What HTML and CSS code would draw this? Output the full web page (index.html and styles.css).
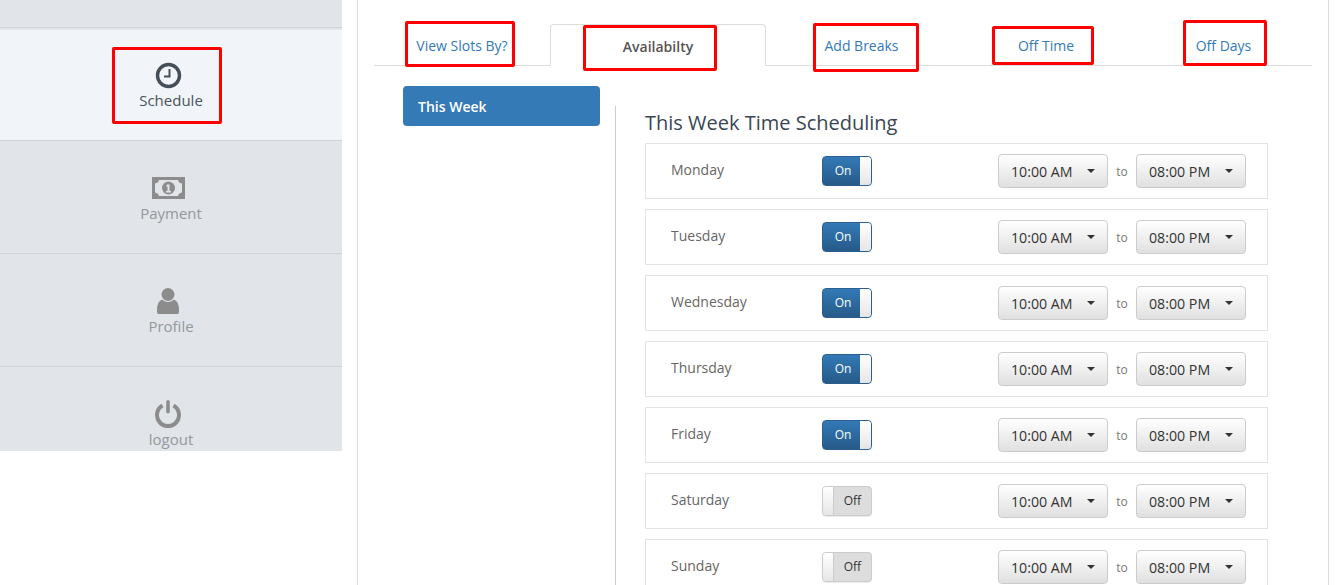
FILE: index.html
```html
<!DOCTYPE html>
<html lang="en" dir="ltr">

<head>
  <meta charset="utf-8">
  <title>Time Scheduling</title>
  <link rel="stylesheet" href="styles.css">
  <meta name="viewport" content="width=device-width, initial-scale=1.0">
</head>

<body>
  <aside class="sidebar">
    <div class="side_top"></div>
    <a class="side_item active">
      <span class="side_icon">
        <svg width="27" height="27" viewBox="0 0 27 27"><circle cx="13.5" cy="13.5" r="11" fill="none" stroke="currentColor" stroke-width="3.4"/><path d="M14.5 7v7.5H9" fill="none" stroke="currentColor" stroke-width="2"/></svg>
      </span>
      <span>Schedule</span>
    </a>
    <a class="side_item">
      <span class="side_icon">
        <svg width="33" height="22" viewBox="0 0 33 22"><path fill-rule="evenodd" fill="currentColor" d="M0 0h33v22H0zM7 3Q6.500 6 3 6.500v9Q6.500 16 7 19h19q.5-3 4-3.500v-9Q26.500 6 26 3z"/><circle cx="16.500" cy="11" r="6.500" fill="currentColor"/><path d="M15 7.500h2.500v6.500H19v1.500h-5V14h1.500V9.500H14z" fill="#e1e5e9"/></svg>
      </span>
      <span>Payment</span>
    </a>
    <a class="side_item">
      <span class="side_icon">
        <svg width="22" height="26" viewBox="0 0 22 26"><circle cx="11" cy="6.500" r="6.500" fill="currentColor"/><path fill="currentColor" d="M5 11.500Q11 16.500 17 11.500Q22 14 22 21V24Q22 26 20 26H2Q0 26 0 24V21Q0 14 5 11.500z"/></svg>
      </span>
      <span>Profile</span>
    </a>
    <a class="side_item">
      <span class="side_icon">
        <svg width="28" height="28" viewBox="0 1 28 28"><path d="M8.500 6.500a11 11 0 1 0 11 0" fill="none" stroke="currentColor" stroke-width="4"/><path d="M14 2.800v10" fill="none" stroke="currentColor" stroke-width="3.600" stroke-linecap="round"/></svg>
      </span>
      <span>logout</span>
    </a>
  </aside>

  <main class="main">
    <ul class="tabs">
      <li class="tab tab_slots"><a>View Slots By?</a></li>
      <li class="tab tab_avail active"><a>Availabilty</a></li>
      <li class="tab tab_breaks"><a>Add Breaks</a></li>
      <li class="tab tab_time"><a>Off Time</a></li>
      <li class="tab tab_days"><a>Off Days</a></li>
    </ul>

    <div class="content">
      <div class="week_col">
        <a class="week_btn">This Week</a>
      </div>
      <section class="schedule">
        <h2>This Week Time Scheduling</h2>

        <div class="day_row">
          <span class="day_name">Monday</span>
          <span class="switch on"><span class="switch_text">On</span><span class="switch_knob"></span></span>
          <div class="times">
            <div class="time_btn"><span>10:00 AM</span><i class="caret"></i></div>
            <span class="to">to</span>
            <div class="time_btn"><span>08:00 PM</span><i class="caret"></i></div>
          </div>
        </div>

        <div class="day_row">
          <span class="day_name">Tuesday</span>
          <span class="switch on"><span class="switch_text">On</span><span class="switch_knob"></span></span>
          <div class="times">
            <div class="time_btn"><span>10:00 AM</span><i class="caret"></i></div>
            <span class="to">to</span>
            <div class="time_btn"><span>08:00 PM</span><i class="caret"></i></div>
          </div>
        </div>

        <div class="day_row">
          <span class="day_name">Wednesday</span>
          <span class="switch on"><span class="switch_text">On</span><span class="switch_knob"></span></span>
          <div class="times">
            <div class="time_btn"><span>10:00 AM</span><i class="caret"></i></div>
            <span class="to">to</span>
            <div class="time_btn"><span>08:00 PM</span><i class="caret"></i></div>
          </div>
        </div>

        <div class="day_row">
          <span class="day_name">Thursday</span>
          <span class="switch on"><span class="switch_text">On</span><span class="switch_knob"></span></span>
          <div class="times">
            <div class="time_btn"><span>10:00 AM</span><i class="caret"></i></div>
            <span class="to">to</span>
            <div class="time_btn"><span>08:00 PM</span><i class="caret"></i></div>
          </div>
        </div>

        <div class="day_row">
          <span class="day_name">Friday</span>
          <span class="switch on"><span class="switch_text">On</span><span class="switch_knob"></span></span>
          <div class="times">
            <div class="time_btn"><span>10:00 AM</span><i class="caret"></i></div>
            <span class="to">to</span>
            <div class="time_btn"><span>08:00 PM</span><i class="caret"></i></div>
          </div>
        </div>

        <div class="day_row">
          <span class="day_name">Saturday</span>
          <span class="switch off"><span class="switch_knob"></span><span class="switch_text">Off</span></span>
          <div class="times">
            <div class="time_btn"><span>10:00 AM</span><i class="caret"></i></div>
            <span class="to">to</span>
            <div class="time_btn"><span>08:00 PM</span><i class="caret"></i></div>
          </div>
        </div>

        <div class="day_row">
          <span class="day_name">Sunday</span>
          <span class="switch off"><span class="switch_knob"></span><span class="switch_text">Off</span></span>
          <div class="times">
            <div class="time_btn"><span>10:00 AM</span><i class="caret"></i></div>
            <span class="to">to</span>
            <div class="time_btn"><span>08:00 PM</span><i class="caret"></i></div>
          </div>
        </div>
      </section>
    </div>
  </main>

  <!-- red annotation boxes drawn over the screenshot -->
  <div class="mark mark_schedule"></div>
  <div class="mark mark_slots"></div>
  <div class="mark mark_avail"></div>
  <div class="mark mark_breaks"></div>
  <div class="mark mark_time"></div>
  <div class="mark mark_days"></div>
</body>

</html>
```

FILE: styles.css
```css
* {
  margin: 0;
  padding: 0;
  box-sizing: border-box;
  font-family: 'Open Sans', sans-serif;
}

html,
body {
  height: 100%;
  overflow: hidden;
}

body {
  display: flex;
  position: relative;
  background: #fff;
  font-size: 14px;
  color: #333;
}

/* sidebar */
.sidebar {
  flex: none;
  width: 342px;
  height: 451px;
  overflow: hidden;
  background: #e1e5e9;
}

.side_top {
  height: 28px;
  border-bottom: 1px solid #d2d5d8;
}

.side_item {
  display: flex;
  flex-direction: column;
  align-items: center;
  height: 113px;
  padding-top: 32px;
  border-bottom: 1px solid #d2d5d8;
  font-size: 15px;
  line-height: 20px;
  color: #95989c;
}

.side_item.active {
  padding-top: 30px;
  border-top: 2px solid #e1e5e9;
  background: #f1f4f8;
  color: #49545f;
}

.side_icon {
  display: flex;
  align-items: center;
  justify-content: center;
  height: 30px;
  margin-right: 6px;
  color: #8c8c8c;
}

.side_item.active .side_icon {
  color: #444f5a;
}

/* main area */
.main {
  flex: 1;
  height: 100%;
  margin: 0 15px;
  padding: 24px 16px 0;
  border-left: 1px solid #ddd;
  border-right: 1px solid #ddd;
}

.tabs {
  display: flex;
  width: 938px;
  height: 42px;
  list-style: none;
  border-bottom: 1px solid #ddd;
}

.tab {
  height: 42px;
  line-height: 44px;
  text-align: center;
  color: #337ab7;
}

.tab_slots { width: 176px; }
.tab_avail { width: 216px; }
.tab_breaks { width: 191px; }
.tab_time { width: 178px; }
.tab_days { width: 177px; }

.tab.active {
  font-weight: 600;
  color: #555;
  background: #fff;
  border: 1px solid #ddd;
  border-bottom-color: #fff;
  border-radius: 4px 4px 0 0;
}

.content {
  display: flex;
  padding: 20px 0 0 29px;
}

.week_col {
  flex: none;
  width: 197px;
}

.week_btn {
  display: block;
  height: 40px;
  padding: 0 15px;
  border-radius: 4px;
  background: #337ab7;
  color: #fff;
  font-weight: 600;
  line-height: 42px;
}

.schedule {
  width: 653px;
  height: 600px;
  margin: 20px 0 0 15px;
  padding-left: 29px;
  border-left: 1px solid #ccc;
}

.schedule h2 {
  margin: 1px 0 4px;
  font-size: 20px;
  font-weight: 400;
  line-height: 32px;
  color: #3a4654;
}

.day_row {
  display: flex;
  align-items: center;
  width: 623px;
  height: 56px;
  margin-bottom: 10px;
  padding: 0 21px 0 25px;
  border: 1px solid #e3e3e3;
  background: #fff;
}

.day_name {
  width: 151px;
  margin-top: -3px;
  color: #666;
}

/* on / off switch */
.switch {
  display: flex;
  width: 50px;
  height: 30px;
  border: 1px solid #2c5f8f;
  border-radius: 4px;
  overflow: hidden;
  font-size: 12px;
  line-height: 28px;
  text-align: center;
}

.switch_knob {
  flex: none;
  width: 11px;
  background: linear-gradient(#fff, #e6e6e6);
}

.switch_text {
  flex: 1;
}

.switch.on {
  color: #fff;
  background: linear-gradient(#337ab7, #265a88);
}

.switch.on .switch_text {
  flex: none;
  width: 37px;
  padding-left: 3px;
}

.switch.off {
  border-color: #ccc;
  background: #ddd;
  color: #333;
  box-shadow: 0 1px 1px rgba(0, 0, 0, 0.08);
}

.switch.off .switch_knob {
  border-right: 1px solid #ccc;
}

/* time pickers */
.times {
  display: flex;
  align-items: center;
  margin-left: auto;
}

.time_btn {
  display: flex;
  align-items: center;
  justify-content: space-between;
  width: 110px;
  height: 34px;
  padding: 0 12px;
  border: 1px solid #ccc;
  border-radius: 4px;
  background: linear-gradient(#fff, #e0e0e0);
  color: #333;
  font-size: 14.2px;
}

.caret {
  width: 0;
  height: 0;
  border-top: 4px solid #333;
  border-left: 4px solid transparent;
  border-right: 4px solid transparent;
}

.to {
  width: 28px;
  text-align: center;
  font-size: 12px;
  color: #777;
}

/* annotation boxes */
.mark {
  position: absolute;
  border: 3px solid #f00;
  border-radius: 2px;
}

.mark_schedule { left: 112px; top: 47px; width: 110px; height: 77px; }
.mark_slots { left: 405px; top: 21px; width: 110px; height: 46px; }
.mark_avail { left: 583px; top: 25px; width: 134px; height: 46px; }
.mark_breaks { left: 813px; top: 23px; width: 106px; height: 49px; }
.mark_time { left: 992px; top: 26px; width: 102px; height: 39px; }
.mark_days { left: 1183px; top: 20px; width: 84px; height: 46px; }
```
